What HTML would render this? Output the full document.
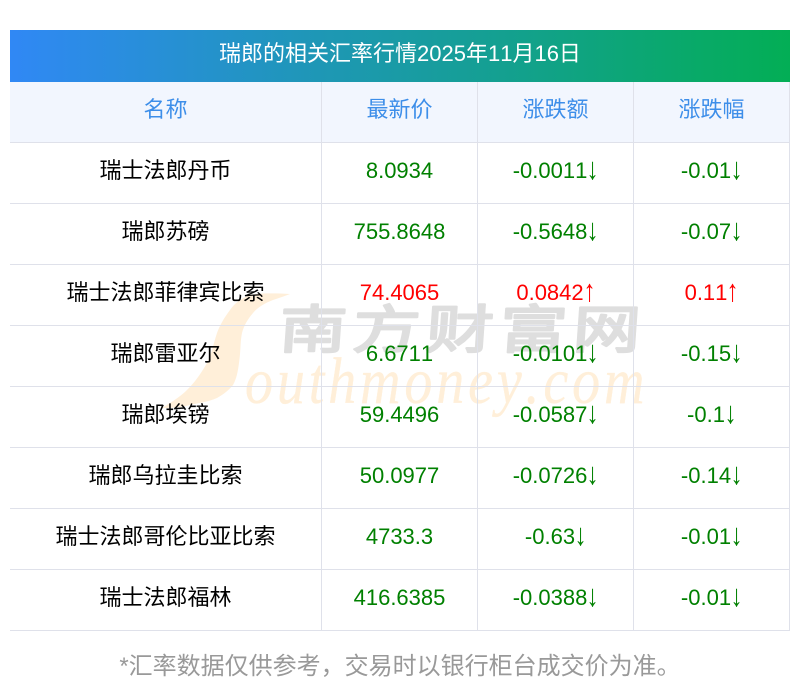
<!DOCTYPE html>
<html lang="zh"><head><meta charset="utf-8"><title>瑞郎的相关汇率行情</title>
<style>
html,body{margin:0;padding:0;background:#fff}
body{width:800px;height:697px;overflow:hidden;position:relative;font-family:"Liberation Sans","WenQuanYi Zen Hei",sans-serif;font-kerning:none}
#wm{position:absolute;left:0;top:0}
#t{position:absolute;left:10px;top:30px;width:780px;height:601px}
.title{height:52px;line-height:48px;text-align:center;color:#fff;font-size:22px;background:linear-gradient(90deg,#3088f5,#03ae55)}
.r{position:absolute;left:0;width:780px;height:61px;border-bottom:1px solid #dfe1ea;box-sizing:border-box}
.r div{position:absolute;top:0;height:100%;text-align:center;font-size:22px;line-height:56px;color:#000}
.r .a{left:0;width:311px}
.r .b{left:312px;width:155px}
.r .c{left:468px;width:155px}
.r .d{left:624px;width:155px}
.h{background:#f2f6fe}
.h div{color:#3d8ee9;line-height:55px}
.r .g{color:#008000}
.r .u{color:#f00}
i{font-style:normal;display:inline-block;line-height:20px;transform:translateY(-2px) scale(1.1,1.4)}
.v{position:absolute;top:52px;bottom:0;width:1px;background:#dfe1ea}
.note{position:absolute;left:0;top:650px;width:800px;text-align:center;font-size:24px;line-height:34px;color:#999}
</style></head><body>
<svg id="wm" width="800" height="697" viewBox="0 0 800 697">
<path d="M290 294C275 293 258 293 250 295C240 299 235 303 230 310C224 318 220 325 217 333C213 345 212 353 207 363C200 375 195 382 187 390C180 397 173 401 162 408C175 408 182 407 190 405C198 403 208 402 217 398C224 394 229 390 233 385C237 378 238 370 239 363C241 350 240 343 242 333C244 325 248 319 253 313C258 307 265 303 273 300C279 298 285 296 290 294Z" fill="#ffefd9"/>
<g transform="translate(245 403) scale(.85 1)">
<text x="0" y="0" font-family="Liberation Serif,serif" font-style="italic" font-size="66" fill="#ffefd9" stroke="#ffefd9" stroke-width="0.3" textLength="470" lengthAdjust="spacing">outhmoney.com</text>
</g>
<g transform="translate(278 348) skewX(-4) scale(1.3 1)">
<text x="0" y="0" font-family="Noto Sans CJK SC,sans-serif" font-size="52" fill="#dedede" stroke="#dedede" stroke-width="2.2" stroke-linejoin="round" textLength="278" lengthAdjust="spacing">南方财富网</text>
</g>
</svg>
<div id="t">
<div class="title">瑞郎的相关汇率行情2025年11月16日</div>
<div class="r h" style="top:52px"><div class="a">名称</div><div class="b">最新价</div><div class="c">涨跌额</div><div class="d">涨跌幅</div></div>
<div class="r" style="top:113px"><div class="a">瑞士法郎丹币</div><div class="b g">8.0934</div><div class="c g">-0.0011<i>↓</i></div><div class="d g">-0.01<i>↓</i></div></div>
<div class="r" style="top:174px"><div class="a">瑞郎苏磅</div><div class="b g">755.8648</div><div class="c g">-0.5648<i>↓</i></div><div class="d g">-0.07<i>↓</i></div></div>
<div class="r" style="top:235px"><div class="a">瑞士法郎菲律宾比索</div><div class="b u">74.4065</div><div class="c u">0.0842<i>↑</i></div><div class="d u">0.11<i>↑</i></div></div>
<div class="r" style="top:296px"><div class="a">瑞郎雷亚尔</div><div class="b g">6.6711</div><div class="c g">-0.0101<i>↓</i></div><div class="d g">-0.15<i>↓</i></div></div>
<div class="r" style="top:357px"><div class="a">瑞郎埃镑</div><div class="b g">59.4496</div><div class="c g">-0.0587<i>↓</i></div><div class="d g">-0.1<i>↓</i></div></div>
<div class="r" style="top:418px"><div class="a">瑞郎乌拉圭比索</div><div class="b g">50.0977</div><div class="c g">-0.0726<i>↓</i></div><div class="d g">-0.14<i>↓</i></div></div>
<div class="r" style="top:479px"><div class="a">瑞士法郎哥伦比亚比索</div><div class="b g">4733.3</div><div class="c g">-0.63<i>↓</i></div><div class="d g">-0.01<i>↓</i></div></div>
<div class="r" style="top:540px"><div class="a">瑞士法郎福林</div><div class="b g">416.6385</div><div class="c g">-0.0388<i>↓</i></div><div class="d g">-0.01<i>↓</i></div></div>
<div class="v" style="left:311px"></div><div class="v" style="left:467px"></div><div class="v" style="left:623px"></div><div class="v" style="left:779px"></div>
</div>
<div class="note">*汇率数据仅供参考，交易时以银行柜台成交价为准。</div>
</body></html>
